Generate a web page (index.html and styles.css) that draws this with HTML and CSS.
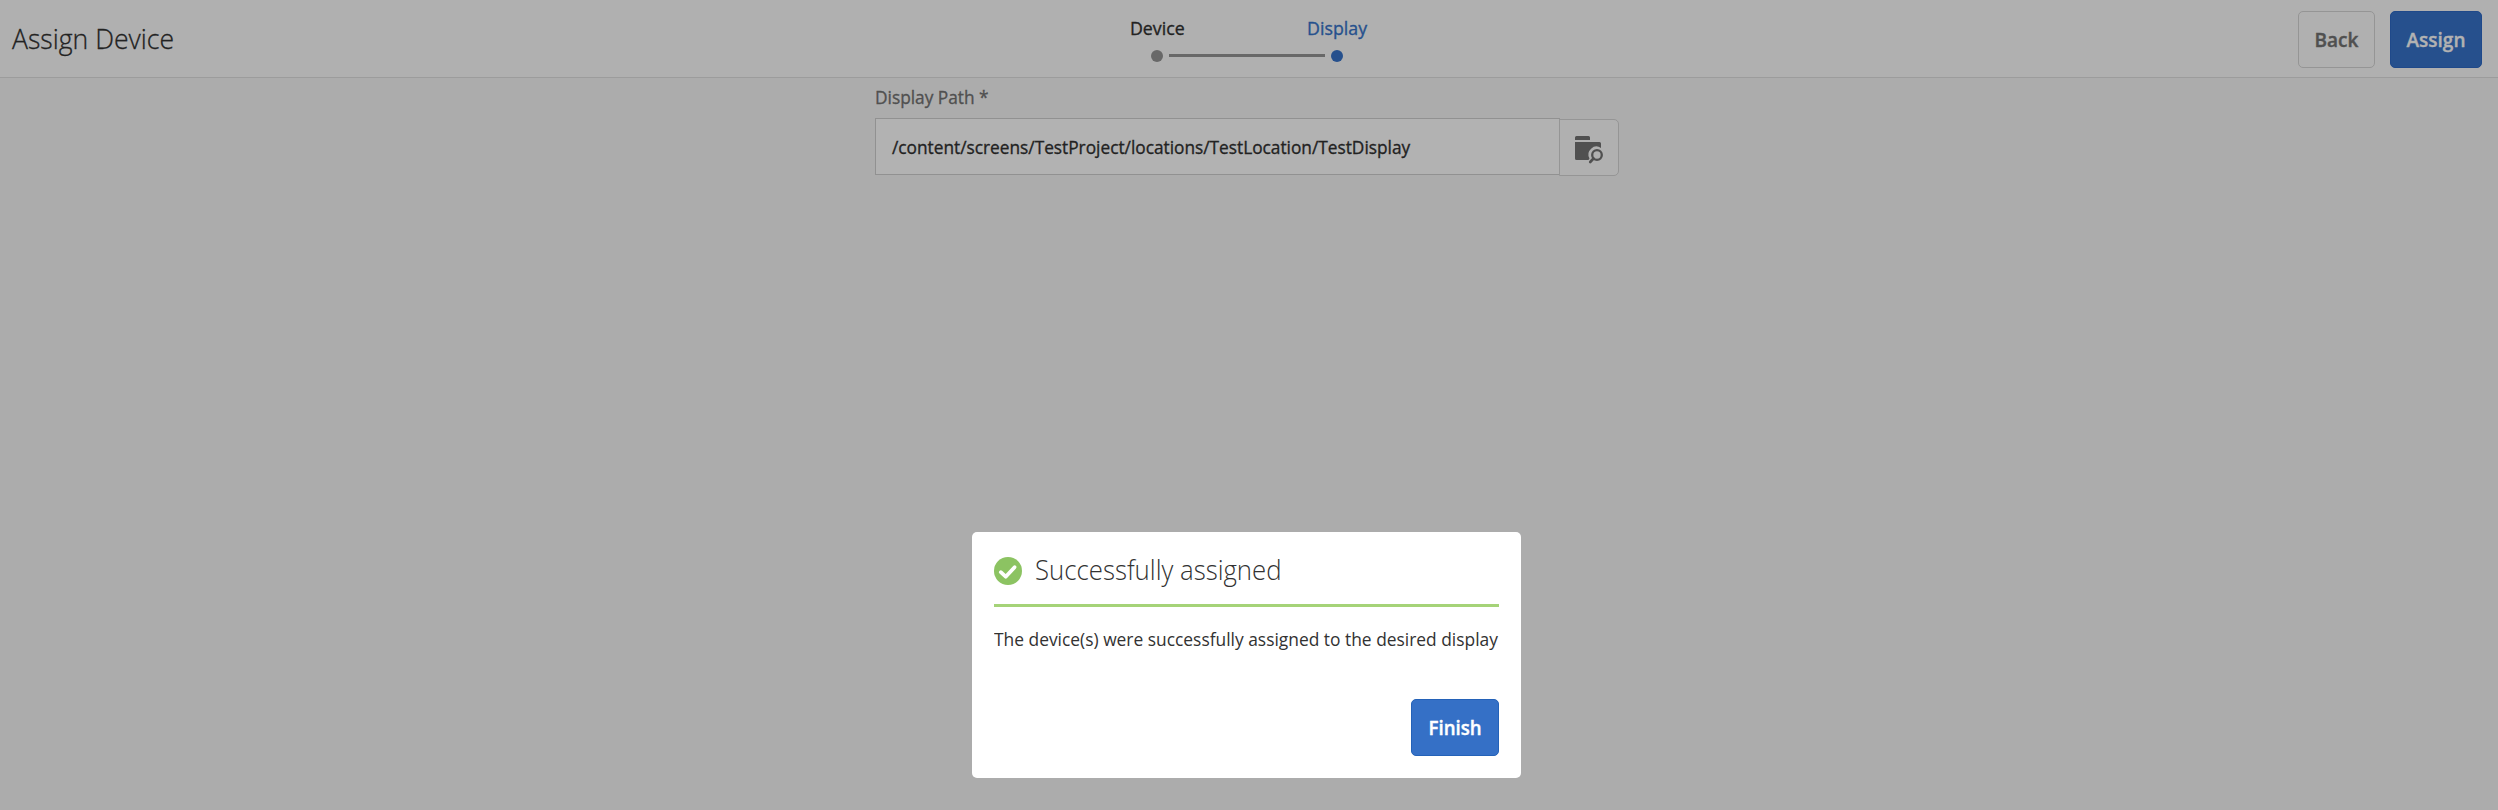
FILE: index.html
```html
<!DOCTYPE html>
<html lang="en">
<head>
<meta charset="utf-8">
<title>Assign Device</title>
<link rel="stylesheet" href="styles.css">
</head>
<body>
<div class="page">
  <header class="header">
    <h1 class="title"><span class="title-text">Assign Device</span></h1>
    <nav class="steps">
      <div class="step"><span class="step-label device">Device</span><i class="dot"></i></div>
      <div class="line"></div>
      <div class="step active"><span class="step-label display">Display</span><i class="dot"></i></div>
    </nav>
    <div class="actions">
      <button class="btn back"><span>Back</span></button>
      <button class="btn primary assign"><span>Assign</span></button>
    </div>
  </header>
  <main class="form">
    <label class="label"><span>Display Path *</span></label>
    <div class="field">
      <div class="input"><span>/content/screens/TestProject/locations/TestLocation/TestDisplay</span></div>
      <button class="browse" aria-label="Browse">
        <svg width="30" height="28" viewBox="0 0 30 28">
          <path d="M0 4V1.500Q0 0 1.500 0H13.500Q15 0 15 1.500V4ZM0 6H24.500Q26 6 26 7.500V12A8 8 0 0 0 14.500 22.500L13.500 24H1.500Q0 24 0 22.500Z" fill="#505050"/>
          <circle cx="22" cy="19" r="4.800" fill="none" stroke="#505050" stroke-width="2.300"/>
          <path d="M18.500 22.500L15.200 26" stroke="#505050" stroke-width="2.600" stroke-linecap="round"/>
        </svg>
      </button>
    </div>
  </main>
</div>
<section class="dialog" role="dialog">
  <div class="dialog-head">
    <svg width="28" height="28" viewBox="0 0 28 28">
      <circle cx="14" cy="14" r="14" fill="#8cc362"/>
      <path d="M6.800 15.200L11.700 19.700L20.600 10.200" fill="none" stroke="#fff" stroke-width="3.800" stroke-linecap="round" stroke-linejoin="round"/>
    </svg>
    <h2 class="dialog-title"><span>Successfully assigned</span></h2>
  </div>
  <p class="message"><span>The device(s) were successfully assigned to the desired display</span></p>
  <div class="dialog-foot"><button class="btn primary finish"><span>Finish</span></button></div>
</section>
</body>
</html>
```
FILE: styles.css
```css
* { box-sizing: border-box; margin: 0; padding: 0; }
html { height: 810px; overflow: hidden; }
body { width: 2498px; height: 810px; overflow: hidden; background: #acacac; font-family: "Open Sans", "Noto Sans", sans-serif; font-size: 19px; color: #222; }
span { white-space: nowrap; display: inline-block; transform: scaleX(.92); transform-origin: 0 50%; }
.header { height: 78px; display: grid; grid-template-columns: 1fr 240px 1fr; align-items: start; background: #b0b0b0; border-bottom: 1px solid #9c9c9c; padding: 0 16px 0 12px; }
.title { font-size: 28px; font-weight: 300; line-height: 38px; padding-top: 19px; -webkit-text-stroke: .3px; }
.title span { transform: scaleX(.95); }
.steps { display: flex; padding-top: 15px; justify-content: space-between; }
.step { width: 60px; display: flex; flex-direction: column; align-items: center; -webkit-text-stroke: .35px; }
.step-label { line-height: 27px; transform-origin: 50% 50%; transform: scaleX(.935); }
.dot { width: 12px; height: 12px; border-radius: 50%; background: #686868; margin-top: 8px; }
.line { width: 156px; height: 3px; background: #686868; margin: 39px -18px 0; }
.active { color: #26508d; }
.active .dot { background: #26508d; }
.actions { display: flex; justify-content: flex-end; gap: 15px; padding-top: 11px; }
.btn { height: 57px; border-radius: 5px; border: 1px solid #959595; font: inherit; font-weight: 600; display: flex; align-items: center; justify-content: center; -webkit-text-stroke: .4px; }
.btn span { transform: scaleX(1); transform-origin: 50% 50%; }
.back { width: 77px; background: #b0b0b0; color: #505050; }
.assign { width: 92px; background: #26508d; border-color: #1f498a; color: #b2b2b2; }
.form { width: 744px; margin-left: 875px; -webkit-text-stroke: .35px; }
.label { display: block; height: 40px; line-height: 27px; padding: 6px 0 0 0; color: #505050; }
.label span { transform: scaleX(.91); }
.field { display: flex; align-items: flex-start; }
.input { width: 685px; height: 57px; background: #b2b2b2; border: 1px solid #919191; padding-left: 16px; line-height: 56px; }
.input span { transform: scaleX(.909); }
.browse { width: 60px; height: 57px; margin: 1px 0 0 -1px; border: 1px solid #959595; border-radius: 0 5px 5px 0; background: #b0b0b0; display: flex; align-items: flex-start; padding: 16px 0 0 15px; }
.browse svg { display: block; flex: none; }
.dialog { position: absolute; left: 972px; top: 532px; width: 549px; height: 246px; padding: 0 22px; background: #fff; border-radius: 5px; color: #323232; }
.dialog-head { height: 75px; display: flex; gap: 13px; padding-top: 25px; border-bottom: 3px solid #a5d378; }
.dialog-title { font-size: 28px; font-weight: 300; line-height: 38px; margin-top: -7px; }
.message { height: 92px; padding-top: 19px; line-height: 27px; }
.message span { transform: scaleX(.915); }
.dialog-foot { display: flex; justify-content: flex-end; }
.finish { width: 88px; background: #3570c6; border-color: #2462b8; color: #fff; }
.finish span { transform: scaleX(.98); }
```
